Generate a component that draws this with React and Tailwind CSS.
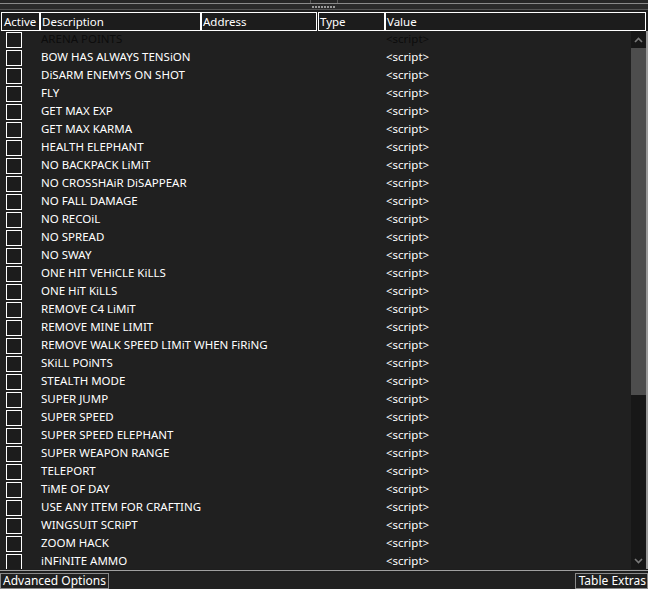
import React from "react";

const rows = [
  "ARENA POINTS",
  "BOW HAS ALWAYS TENSiON",
  "DiSARM ENEMYS ON SHOT",
  "FLY",
  "GET MAX EXP",
  "GET MAX KARMA",
  "HEALTH ELEPHANT",
  "NO BACKPACK LiMiT",
  "NO CROSSHAiR DiSAPPEAR",
  "NO FALL DAMAGE",
  "NO RECOiL",
  "NO SPREAD",
  "NO SWAY",
  "ONE HIT VEHiCLE KiLLS",
  "ONE HiT KiLLS",
  "REMOVE C4 LiMiT",
  "REMOVE MINE LIMIT",
  "REMOVE WALK SPEED LIMiT WHEN FiRiNG",
  "SKiLL POiNTS",
  "STEALTH MODE",
  "SUPER JUMP",
  "SUPER SPEED",
  "SUPER SPEED ELEPHANT",
  "SUPER WEAPON RANGE",
  "TELEPORT",
  "TiME OF DAY",
  "USE ANY ITEM FOR CRAFTING",
  "WINGSUIT SCRiPT",
  "ZOOM HACK",
  "iNFiNITE AMMO",
];

function Chevron({ up }) {
  return (
    <svg width="9" height="6" viewBox="0 0 9 6">
      <path
        d={up ? "M1 5 L4.5 1.5 L8 5" : "M1 1 L4.5 4.5 L8 1"}
        stroke="#7a7a7a"
        strokeWidth="1.6"
        fill="none"
      />
    </svg>
  );
}

export default function App() {
  return (
    <div
      className="w-[648px] h-[589px] bg-[#202020] flex flex-col overflow-hidden text-[11.5px] leading-none"
      style={{ fontFamily: '"Noto Sans", "Open Sans", sans-serif' }}
    >
      {/* splitter */}
      <div className="h-[3px] bg-[#262626] flex justify-center">
        <div className="w-[28px] border-x border-[#5a5a5a] h-full"></div>
      </div>
      <div className="h-[1px] bg-[#8a8a8a]"></div>
      <div className="h-[5px] bg-[#2a2a2a] flex items-center justify-center">
        <div className="flex gap-[1px] ml-[-1px]">
          {Array.from({ length: 8 }).map((_, i) => (
            <div key={i} className="w-[2px] h-[2px] bg-[#9a9a9a]"></div>
          ))}
        </div>
      </div>
      <div className="h-[1px] bg-[#555555]"></div>
      <div className="h-[2px] bg-[#1e1e1e]"></div>

      {/* header */}
      <div className="h-[19px] flex pl-[1px] bg-[#1c1c1c]">
        <div className="w-[39px] border border-white flex items-center pl-[2px] text-white">Active</div>
        <div className="w-[161px] border border-white flex items-center pl-[1px] text-white">Description</div>
        <div className="w-[116px] border border-white flex items-center pl-[1px] text-white">Address</div>
        <div className="w-[1px]"></div>
        <div className="w-[67px] border border-white flex items-center pl-[1px] text-white">Type</div>
        <div className="w-[261px] border border-white flex items-center pl-[1px] text-white">Value</div>
      </div>

      {/* body */}
      <div className="h-[538px] flex overflow-hidden">
        <div className="flex-1 flex flex-col overflow-hidden">
          {rows.map((r, i) => (
            <div key={i} className="h-[18px] shrink-0 flex items-center">
              <div className="w-[16px] h-[16px] border border-white ml-[6px] bg-[#1c1c1c] shrink-0"></div>
              <div
                className={`ml-[19px] w-[345px] pb-[2px] whitespace-nowrap ${i === 0 ? "text-[#0c0c0c]" : "text-white"}`}
              >
                {r}
              </div>
              <div className={`pb-[2px] ${i === 0 ? "text-[#0c0c0c]" : "text-white"}`}>&lt;script&gt;</div>
            </div>
          ))}
        </div>
        <div className="w-[15px] bg-[#171717] flex flex-col">
          <div className="h-[17px] flex items-center justify-center">
            <Chevron up />
          </div>
          <div className="h-[347px] bg-[#4d4d4d]"></div>
          <div className="flex-1"></div>
          <div className="h-[17px] flex items-center justify-center">
            <Chevron />
          </div>
        </div>
        <div className="w-[2px] bg-[#9a9a9a]"></div>
      </div>

      {/* bottom */}
      <div className="h-[1px] bg-[#1e1e1e]"></div>
      <div className="h-[1px] bg-[#a0a0a0]"></div>
      <div className="h-[2px] bg-[#1e1e1e]"></div>
      <div className="flex-1 flex justify-between bg-[#202020] text-[12px]">
        <div className="border border-[#8a8a8a] px-[2px] flex items-center text-white">Advanced Options</div>
        <div className="border border-[#8a8a8a] pl-[3px] pr-[1px] flex items-center text-white">Table Extras</div>
      </div>
    </div>
  );
}
